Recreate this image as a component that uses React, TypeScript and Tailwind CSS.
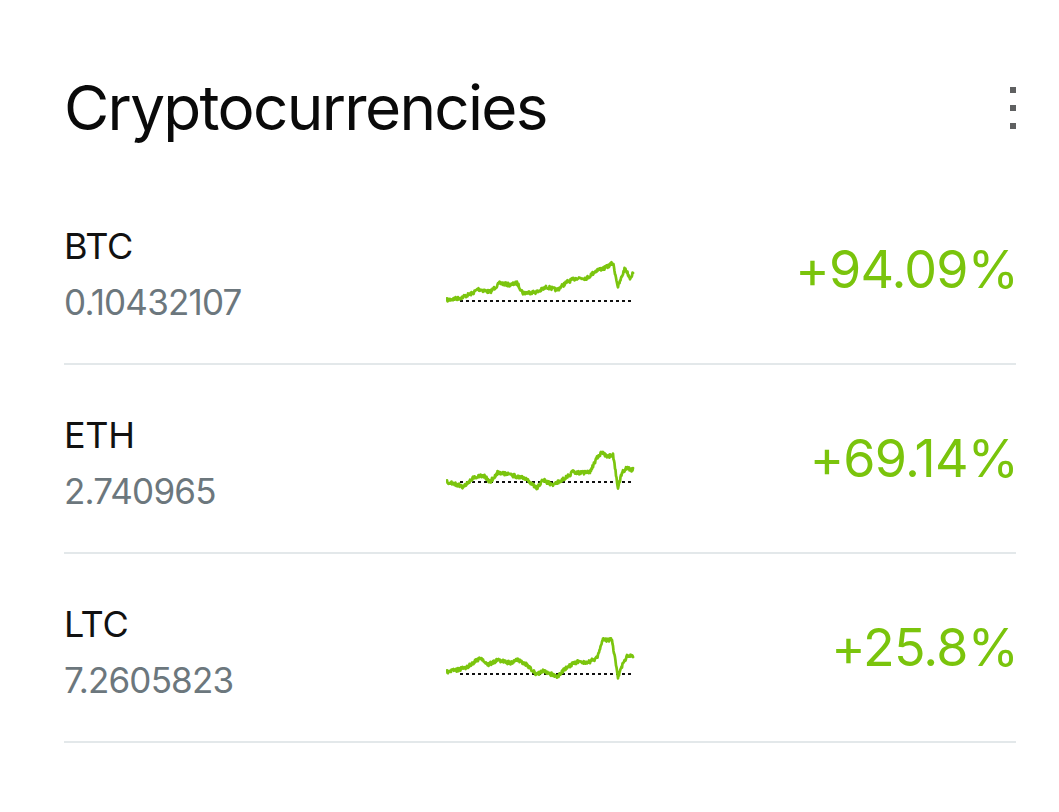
import React from 'react';

type Pt = [number, number];

const coins = [
  {
    name: 'BTC',
    amount: '0.10432107',
    change: '+94.09%',
    base: 46,
    seed: 7,
    points: [[1, 45], [14, 43], [27, 38], [32, 34], [44, 37], [54, 28], [64, 30], [71, 28], [77, 38], [91, 37], [101, 32], [111, 35], [121, 27], [131, 23], [141, 23], [151, 15], [159, 13], [167, 8], [172, 32], [179, 13], [184, 23], [187, 18]] as Pt[],
  },
  {
    name: 'ETH',
    amount: '2.740965',
    change: '+69.14%',
    base: 38,
    seed: 13,
    points: [[1, 38], [7, 39], [17, 43], [27, 34], [37, 31], [44, 38], [52, 28], [64, 31], [74, 33], [81, 36], [91, 44], [97, 36], [107, 41], [121, 33], [127, 28], [134, 29], [144, 28], [151, 14], [156, 8], [161, 13], [167, 11], [172, 44], [176, 28], [181, 24], [186, 26], [187, 24]] as Pt[],
  },
  {
    name: 'LTC',
    amount: '7.2605823',
    change: '+25.8%',
    base: 41,
    seed: 29,
    points: [[1, 39], [11, 37], [21, 34], [34, 25], [41, 32], [52, 27], [64, 30], [72, 27], [81, 32], [91, 42], [97, 37], [111, 44], [121, 34], [131, 29], [141, 30], [151, 25], [157, 7], [166, 7], [172, 44], [177, 30], [182, 22], [187, 24]] as Pt[],
  },
];

// small seeded random so the wiggle is the same on every render
function rng(seed: number) {
  let s = seed;
  return () => {
    s = (s * 16807) % 2147483647;
    return (s - 1) / 2147483646;
  };
}

function buildPath(points: Pt[], seed: number) {
  const rand = rng(seed);
  const out: string[] = [];
  for (let i = 0; i < points.length - 1; i++) {
    const [x0, y0] = points[i];
    const [x1, y1] = points[i + 1];
    for (let x = x0; x < x1; x += 0.5) {
      const t = (x - x0) / (x1 - x0);
      const y = y0 + (y1 - y0) * t + (rand() - 0.5) * 3.5;
      out.push(`${out.length === 0 ? 'M' : 'L'}${x.toFixed(1)} ${y.toFixed(1)}`);
    }
  }
  const last = points[points.length - 1];
  out.push(`L${last[0]} ${last[1]}`);
  return out.join(' ');
}

function Sparkline({ points, base, seed }: { points: Pt[]; base: number; seed: number }) {
  return (
    <svg width="190" height="60" viewBox="0 0 190 60" className="mt-[30px] shrink-0">
      <line x1="14" y1={base} x2="188" y2={base} stroke="#111" strokeWidth="2" strokeDasharray="3 3" />
      <path d={buildPath(points, seed)} fill="none" stroke="#7bc50e" strokeWidth="2.7" strokeLinejoin="round" strokeLinecap="round" />
    </svg>
  );
}

export default function App() {
  return (
    <div className="min-h-screen bg-white pl-[64px] pr-[43px] font-['Inter',sans-serif]">
      {/* Header */}
      <div className="flex h-[176px] items-start justify-between pt-[70px]">
        <h1 className="text-[62px] leading-[76px] tracking-[-1.7px] text-[#0a0a0a]">Cryptocurrencies</h1>
        <div className="mt-[17px] flex flex-col gap-[12px]">
          <span className="block h-[6px] w-[6px] bg-[#5f6061]" />
          <span className="block h-[6px] w-[6px] bg-[#5f6061]" />
          <span className="block h-[6px] w-[6px] bg-[#5f6061]" />
        </div>
      </div>

      {/* Coin rows */}
      {coins.map((c) => (
        <div key={c.name} className="flex h-[189px] items-center border-b-2 border-[#e3e8ea]">
          <div className="flex w-[382px] shrink-0 flex-col pt-[8px]">
            <span className="text-[36px] leading-[44px] tracking-[-0.3px] text-[#111]">{c.name}</span>
            <span className="mt-[12px] text-[35px] leading-[44px] tracking-[-0.8px] text-[#6c777d]">{c.amount}</span>
          </div>
          <Sparkline points={c.points} base={c.base} seed={c.seed} />
          <div className="mr-[-2px] flex-1 text-right text-[52px] leading-[60px] tracking-[-0.8px] text-[#7ac40c]">{c.change}</div>
        </div>
      ))}
    </div>
  );
}
